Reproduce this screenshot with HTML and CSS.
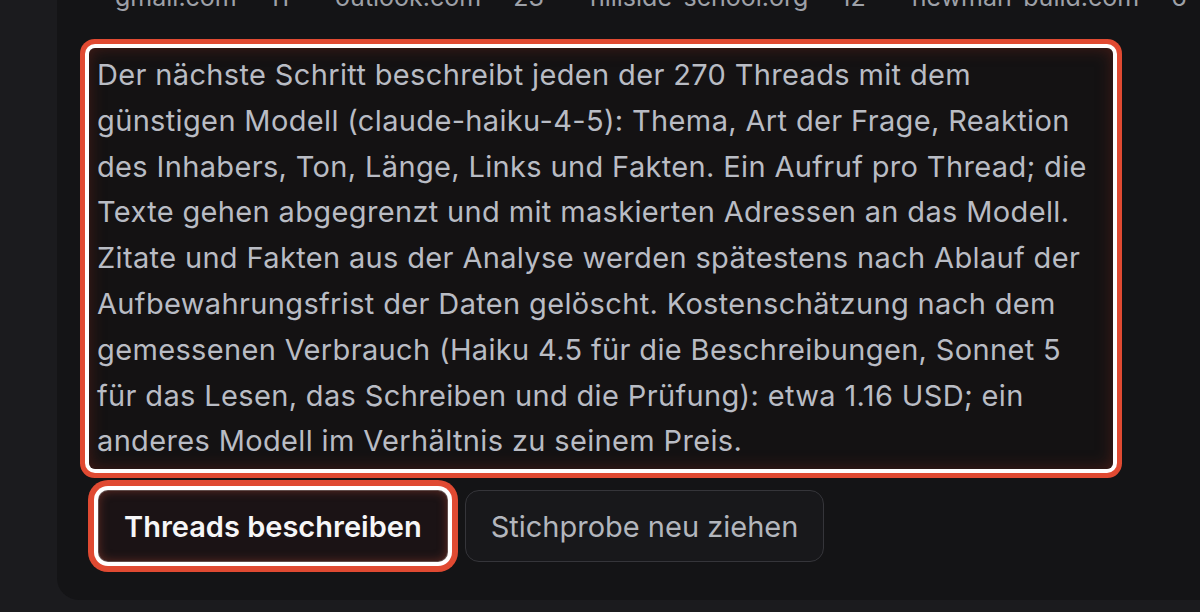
FILE: index.html
```html
<!DOCTYPE html>
<html lang="de">
<head>
<meta charset="utf-8">
<link rel="stylesheet" href="styles.css">
</head>
<body>
<div class="page">
  <section class="card">
    <div class="stats">
      <span class="item"><span class="dom">gmail.com</span><span class="num">11</span></span>
      <span class="item"><span class="dom">outlook.com</span><span class="num">23</span></span>
      <span class="item"><span class="dom">hillside-school.org</span><span class="num">12</span></span>
      <span class="item"><span class="dom">newman-build.com</span><span class="num">6</span></span>
    </div>
    <p class="note">Der nächste Schritt beschreibt jeden der 270 Threads mit dem günstigen Modell (claude-haiku-4-5): Thema, Art der Frage, Reaktion des Inhabers, Ton, Länge, Links und Fakten. Ein Aufruf pro Thread; die Texte gehen abgegrenzt und mit maskierten Adressen an das Modell. Zitate und Fakten aus der Analyse werden spätestens nach Ablauf der Aufbewahrungsfrist der Daten gelöscht. Kostenschätzung nach dem gemessenen Verbrauch (Haiku 4.5 für die Beschreibungen, Sonnet 5 für das Lesen, das Schreiben und die Prüfung): etwa 1.16 USD; ein anderes Modell im Verhältnis zu seinem Preis.</p>
    <div class="actions">
      <button class="btn primary">Threads beschreiben</button>
      <button class="btn secondary">Stichprobe neu ziehen</button>
    </div>
  </section>
</div>
</body>
</html>
```

FILE: styles.css
```css
html, body {
  margin: 0;
  padding: 0;
  background: #1b1b1e;
  height: 612px;
  overflow: hidden;
}
.page {
  padding-left: 57px;
  font-family: Inter, "Noto Sans", sans-serif;
}
.card {
  background: #141416;
  border-radius: 0 0 0 22px;
  margin-top: -40px;
  height: 640px;
  box-sizing: border-box;
  padding: 0 0 0 32px;
  width: 1200px;
}
.stats {
  display: flex;
  gap: 46px;
  padding: 24px 0 0 26px;
  height: 52px;
  box-sizing: border-box;
  line-height: 26px;
  font-size: 25px;
  color: #9ea1a8;
  white-space: nowrap;
}
.item {
  display: flex;
  gap: 32px;
}
.note {
  margin: 36px 0 0 0;
  width: 1024px;
  box-sizing: border-box;
  padding: 4px 8px 5px 8px;
  font-size: 29px;
  letter-spacing: 0.35px;
  line-height: 45.8px;
  color: #b9bcc4;
  border-radius: 6px;
  background: #141213;
  box-shadow: 0 0 0 4px #ffffff, 0 0 0 9px #e04a32, inset 0 0 16px rgba(110, 36, 26, 0.55);
}
.actions {
  display: flex;
  gap: 17px;
  margin-top: 21px;
  margin-left: 9px;
}
.btn {
  font-family: Inter, "Noto Sans", sans-serif;
  font-size: 29px;
  height: 72px;
  padding: 0 26px;
  box-sizing: border-box;
  cursor: pointer;
}
.primary {
  color: #f6f6f7;
  font-weight: 600;
  padding: 0 25px;
  background: #1b1315;
  border: 1px solid rgba(230, 190, 180, 0.35);
  border-radius: 10px;
  box-shadow: 0 0 0 4px #ffffff, 0 0 0 10px #e04a32, inset 0 0 10px rgba(150, 60, 45, 0.55);
}
.secondary {
  color: #b3b6bd;
  font-weight: 400;
  padding: 0 25px;
  background: #18181b;
  border: 1.5px solid #35353a;
  border-radius: 14px;
}
```
